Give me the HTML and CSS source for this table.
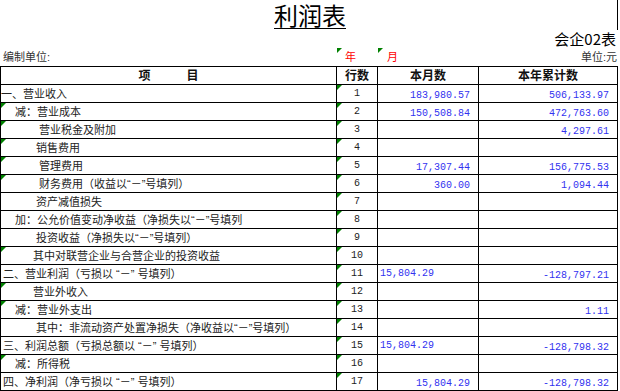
FILE: index.html
```html
<!DOCTYPE html>
<html lang="zh-CN">
<head>
<meta charset="utf-8">
<title>利润表</title>
<link rel="stylesheet" href="styles.css">
</head>
<body>
<div class="sheet">
  <div class="title-row"><span class="title">利润表</span></div>
  <div class="code-row">会企02表</div>
  <div class="info-row">
    <div class="info-cell unit-name">编制单位:</div>
    <div class="info-cell date tri">年</div>
    <div class="info-cell date month tri">月</div>
    <div class="info-cell currency">单位:元</div>
  </div>
  <div class="grid">
    <div class="c hd">项　　　目</div>
    <div class="c hd">行数</div>
    <div class="c hd">本月数</div>
    <div class="c hd">本年累计数</div>

    <div class="c item top1">一、营业收入</div>
    <div class="c no tri">1</div>
    <div class="c num">183,980.57</div>
    <div class="c num">506,133.97</div>

    <div class="c item lv1 tri">减：营业成本</div>
    <div class="c no tri">2</div>
    <div class="c num">150,508.84</div>
    <div class="c num">472,763.60</div>

    <div class="c item ind-c tri">营业税金及附加</div>
    <div class="c no tri">3</div>
    <div class="c num"></div>
    <div class="c num">4,297.61</div>

    <div class="c item ind-b tri">销售费用</div>
    <div class="c no tri">4</div>
    <div class="c num"></div>
    <div class="c num"></div>

    <div class="c item ind-c tri">管理费用</div>
    <div class="c no tri">5</div>
    <div class="c num">17,307.44</div>
    <div class="c num">156,775.53</div>

    <div class="c item ind-c tri">财务费用（收益以“－”号填列）</div>
    <div class="c no tri">6</div>
    <div class="c num">360.00</div>
    <div class="c num">1,094.44</div>

    <div class="c item ind-b">资产减值损失</div>
    <div class="c no tri">7</div>
    <div class="c num"></div>
    <div class="c num"></div>

    <div class="c item lv1">加：公允价值变动净收益（净损失以“－”号填列</div>
    <div class="c no tri">8</div>
    <div class="c num"></div>
    <div class="c num"></div>

    <div class="c item ind-b">投资收益（净损失以“－”号填列）</div>
    <div class="c no tri">9</div>
    <div class="c num"></div>
    <div class="c num"></div>

    <div class="c item ind-a tri">其中对联营企业与合营企业的投资收益</div>
    <div class="c no tri">10</div>
    <div class="c num"></div>
    <div class="c num"></div>

    <div class="c item top2">二、营业利润（亏损以 “－” 号填列）</div>
    <div class="c no tri">11</div>
    <div class="c num lead">15,804.29</div>
    <div class="c num">-128,797.21</div>

    <div class="c item ind-a tri">营业外收入</div>
    <div class="c no tri">12</div>
    <div class="c num"></div>
    <div class="c num"></div>

    <div class="c item lv1 tri">减：营业外支出</div>
    <div class="c no tri">13</div>
    <div class="c num"></div>
    <div class="c num">1.11</div>

    <div class="c item ind-b">其中：非流动资产处置净损失（净收益以“－”号填列）</div>
    <div class="c no tri">14</div>
    <div class="c num"></div>
    <div class="c num"></div>

    <div class="c item top2">三、利润总额（亏损总额以 “－” 号填列）</div>
    <div class="c no tri">15</div>
    <div class="c num lead">15,804.29</div>
    <div class="c num">-128,798.32</div>

    <div class="c item lv1 tri">减：所得税</div>
    <div class="c no tri">16</div>
    <div class="c num"></div>
    <div class="c num"></div>

    <div class="c item top2">四、净利润（净亏损以 “－” 号填列）</div>
    <div class="c no tri">17</div>
    <div class="c num">15,804.29</div>
    <div class="c num">-128,798.32</div>
  </div>
</div>
</body>
</html>
```

FILE: styles.css
```css
html, body {
  margin: 0;
  padding: 0;
  background: #ffffff;
}

body {
  font-family: "Liberation Sans", "Noto Sans CJK SC", sans-serif;
  color: #222222;
}

.sheet {
  width: 618px;
}

.title-row {
  height: 30px;
  box-sizing: border-box;
  border-right: 1px solid #000000;
  padding-left: 3px;
  text-align: center;
}

.title {
  font-family: "Noto Sans CJK SC", sans-serif;
  font-size: 24px;
  line-height: 30px;
  color: #000000;
  text-decoration: underline;
  text-decoration-thickness: 1px;
  text-underline-offset: 3px;
}

.code-row {
  height: 18px;
  line-height: 18px;
  padding-right: 2px;
  text-align: right;
  font-family: "Noto Sans CJK SC", sans-serif;
  font-size: 15px;
  color: #000000;
}

.info-row {
  display: grid;
  grid-template-columns: 337px 41px 101px 139px;
  height: 18px;
  font-size: 11px;
}

.info-cell {
  position: relative;
  display: flex;
  align-items: center;
  line-height: 14px;
  color: #333333;
}

.unit-name {
  padding-left: 3px;
}

.date {
  padding-left: 8px;
  color: #ff0000;
}

.month {
  padding-left: 9px;
}

.currency {
  justify-content: flex-end;
  padding-right: 1px;
}

.grid {
  display: grid;
  grid-template-columns: 336px 41px 101px 139px;
  grid-auto-rows: 18px;
  width: max-content;
  border-left: 1px solid #000000;
  border-top: 1px solid #000000;
}

.c {
  position: relative;
  box-sizing: border-box;
  display: flex;
  border-right: 1px solid #000000;
  border-bottom: 1px solid #000000;
  white-space: nowrap;
  font-size: 11px;
  line-height: 14px;
}

.hd {
  justify-content: center;
  align-items: center;
  font-size: 12px;
  font-weight: bold;
  color: #111111;
}

.item {
  align-items: center;
  color: #222222;
}

.top1 { padding-left: 0; }
.top2 { padding-left: 2px; }
.lv1 { padding-left: 14px; }
.ind-a { padding-left: 32px; }
.ind-b { padding-left: 35px; }
.ind-c { padding-left: 38px; }

.no {
  justify-content: center;
  align-items: center;
  font-family: "Liberation Mono", monospace;
  font-size: 10px;
  color: #222222;
}

.num {
  justify-content: flex-end;
  align-items: flex-end;
  padding-right: 8px;
  padding-bottom: 1px;
  font-family: "Liberation Mono", monospace;
  font-size: 10px;
  line-height: 11px;
  color: #3232f0;
}

.num.lead {
  justify-content: flex-start;
  align-items: flex-start;
  padding-left: 2px;
  padding-top: 3px;
}

.tri::before {
  content: "";
  position: absolute;
  left: 0;
  top: 0;
  width: 0;
  height: 0;
  border-top: 5px solid #008000;
  border-right: 5px solid transparent;
}
```
